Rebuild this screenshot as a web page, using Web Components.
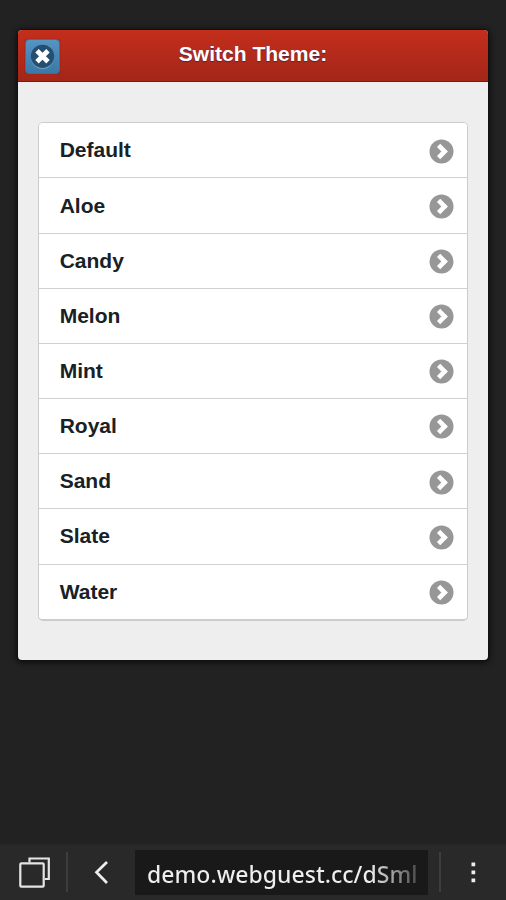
<!DOCTYPE html>
<html lang="en">
<head>
<meta charset="utf-8">
<title>Switch Theme</title>
<style>
html,body{margin:0;height:100%;background:#222;overflow:hidden}
body{font-family:"Liberation Sans",Arial,sans-serif}
</style>
</head>
<body>
<theme-app></theme-app>
<script>
const define = (name, html) => {
  const template = document.createElement('template');
  template.innerHTML = html;
  customElements.define(name, class extends HTMLElement {
    constructor() {
      super();
      this.attachShadow({ mode: 'open' }).append(template.content.cloneNode(true));
    }
  });
};

define('close-button', `
<style>
:host{display:block;box-sizing:border-box;width:35px;height:35px;border:1px solid #43708f;border-radius:4px;background:linear-gradient(#5594c3,#3b78a8);box-shadow:0 0 1px #681a18}
svg{display:block;margin:4px}
</style>
<svg width="25" height="25" viewBox="0 0 25 25"><circle cx="12.5" cy="13.4" r="11.4" fill="#76a9cb"/><circle cx="12.5" cy="12.3" r="11.6" fill="#244f70"/><path d="M7 6.8l11 11M18 6.8l-11 11" stroke="#fff" stroke-width="4.8"/></svg>`);

define('panel-header', `
<style>
:host{display:grid;grid-template-columns:35px 1fr 35px;box-sizing:border-box;height:52px;padding:8.5px 7px 0;border-bottom:1.5px solid #990b09;border-radius:4px 4px 0 0;background:linear-gradient(#c42e1c,#a32619)}
h1{margin:0;padding-top:1px;text-align:center;color:#fff;font:bold 21px/27px "Liberation Sans",Arial,sans-serif;letter-spacing:.02px;text-shadow:0 1px 1px #55214a;white-space:nowrap}
</style>
<close-button></close-button><h1><slot></slot></h1>`);

define('theme-row', `
<style>
:host{display:flex;flex:1;align-items:center;justify-content:space-between;box-sizing:border-box;padding:0 12.7px 0 20.3px;border-bottom:1.6px solid #d0d0d0;background:#fff;color:#172126;font:bold 21px/26px "Liberation Sans",Arial,sans-serif}
:host(:last-child){border-bottom:0}
svg{display:block;margin-top:1.5px}
</style>
<span><slot></slot></span>
<svg width="25" height="25" viewBox="0 0 25 25"><circle cx="12.5" cy="12.5" r="12" fill="#979797"/><path d="M9.6 6.4l6.1 6.1-6.1 6.1" fill="none" stroke="#fff" stroke-width="4.6"/></svg>`);

define('theme-list', `
<style>
:host{display:flex;flex-direction:column;box-sizing:border-box;height:498.4px;border:1px solid #ccc;border-bottom-width:2px;border-radius:5px;overflow:hidden;background:#fff}
</style>
<slot></slot>`);

define('theme-panel', `
<style>
:host{display:block;box-sizing:border-box;height:630px;border-radius:4px;background:#eee;box-shadow:0 0 0 1px #111,0 1px 6px 1px #080808}
.body{padding:40.3px 20px 0}
</style>
<panel-header>Switch Theme:</panel-header><div class="body"><theme-list><slot></slot></theme-list></div>`);

define('browser-bar', `
<style>
:host{display:grid;grid-template-columns:66px 3px 66px 293px 11px 3px 64px;align-items:center;box-sizing:border-box;height:56px;padding-bottom:1px;border-top:1px solid #262626;background:#292929}
svg{display:block}
i{height:40px;width:2px;background:#3d3d3d;margin-bottom:1px}
.url{height:45px;padding-left:12px;box-sizing:border-box;background:#191919;overflow:hidden;white-space:nowrap}
.url span{display:block;width:272px;font:500 23px/48px "Noto Sans",sans-serif;letter-spacing:.02px;color:transparent;background:linear-gradient(90deg,#eee 223px,#555 268px);background-clip:text;-webkit-background-clip:text}
</style>
<svg width="66" height="50" viewBox="0 0 66 50" fill="none" stroke="#e5e5e5" stroke-width="2.2"><rect x="20.3" y="16.3" width="23.4" height="23.4" rx="1"/><path d="M29.5 15.5v-4h19.3V32h-4"/></svg>
<i></i>
<svg width="66" height="50" viewBox="0 0 66 50"><path d="M38 15L27.5 25.3 38 36" fill="none" stroke="#eee" stroke-width="2.7"/></svg>
<div class="url"><span>demo.webguest.cc/dSml</span></div>
<b></b><i></i>
<svg width="64" height="50" viewBox="0 0 64 50" fill="#eee"><path d="M29.5 15.5h3.7v3.7h-3.7zM29.5 23.5h3.7v3.7h-3.7zM29.5 31.5h3.7v3.7h-3.7z"/></svg>`);

define('theme-app', `
<style>
:host{display:flex;flex-direction:column;justify-content:space-between;box-sizing:border-box;width:506px;height:900px;padding-top:30px;background:#222}
theme-panel{margin:0 18.4px}
</style>
<theme-panel>
<theme-row>Default</theme-row><theme-row>Aloe</theme-row><theme-row>Candy</theme-row><theme-row>Melon</theme-row><theme-row>Mint</theme-row><theme-row>Royal</theme-row><theme-row>Sand</theme-row><theme-row>Slate</theme-row><theme-row>Water</theme-row>
</theme-panel>
<browser-bar></browser-bar>`);
</script>
</body>
</html>
